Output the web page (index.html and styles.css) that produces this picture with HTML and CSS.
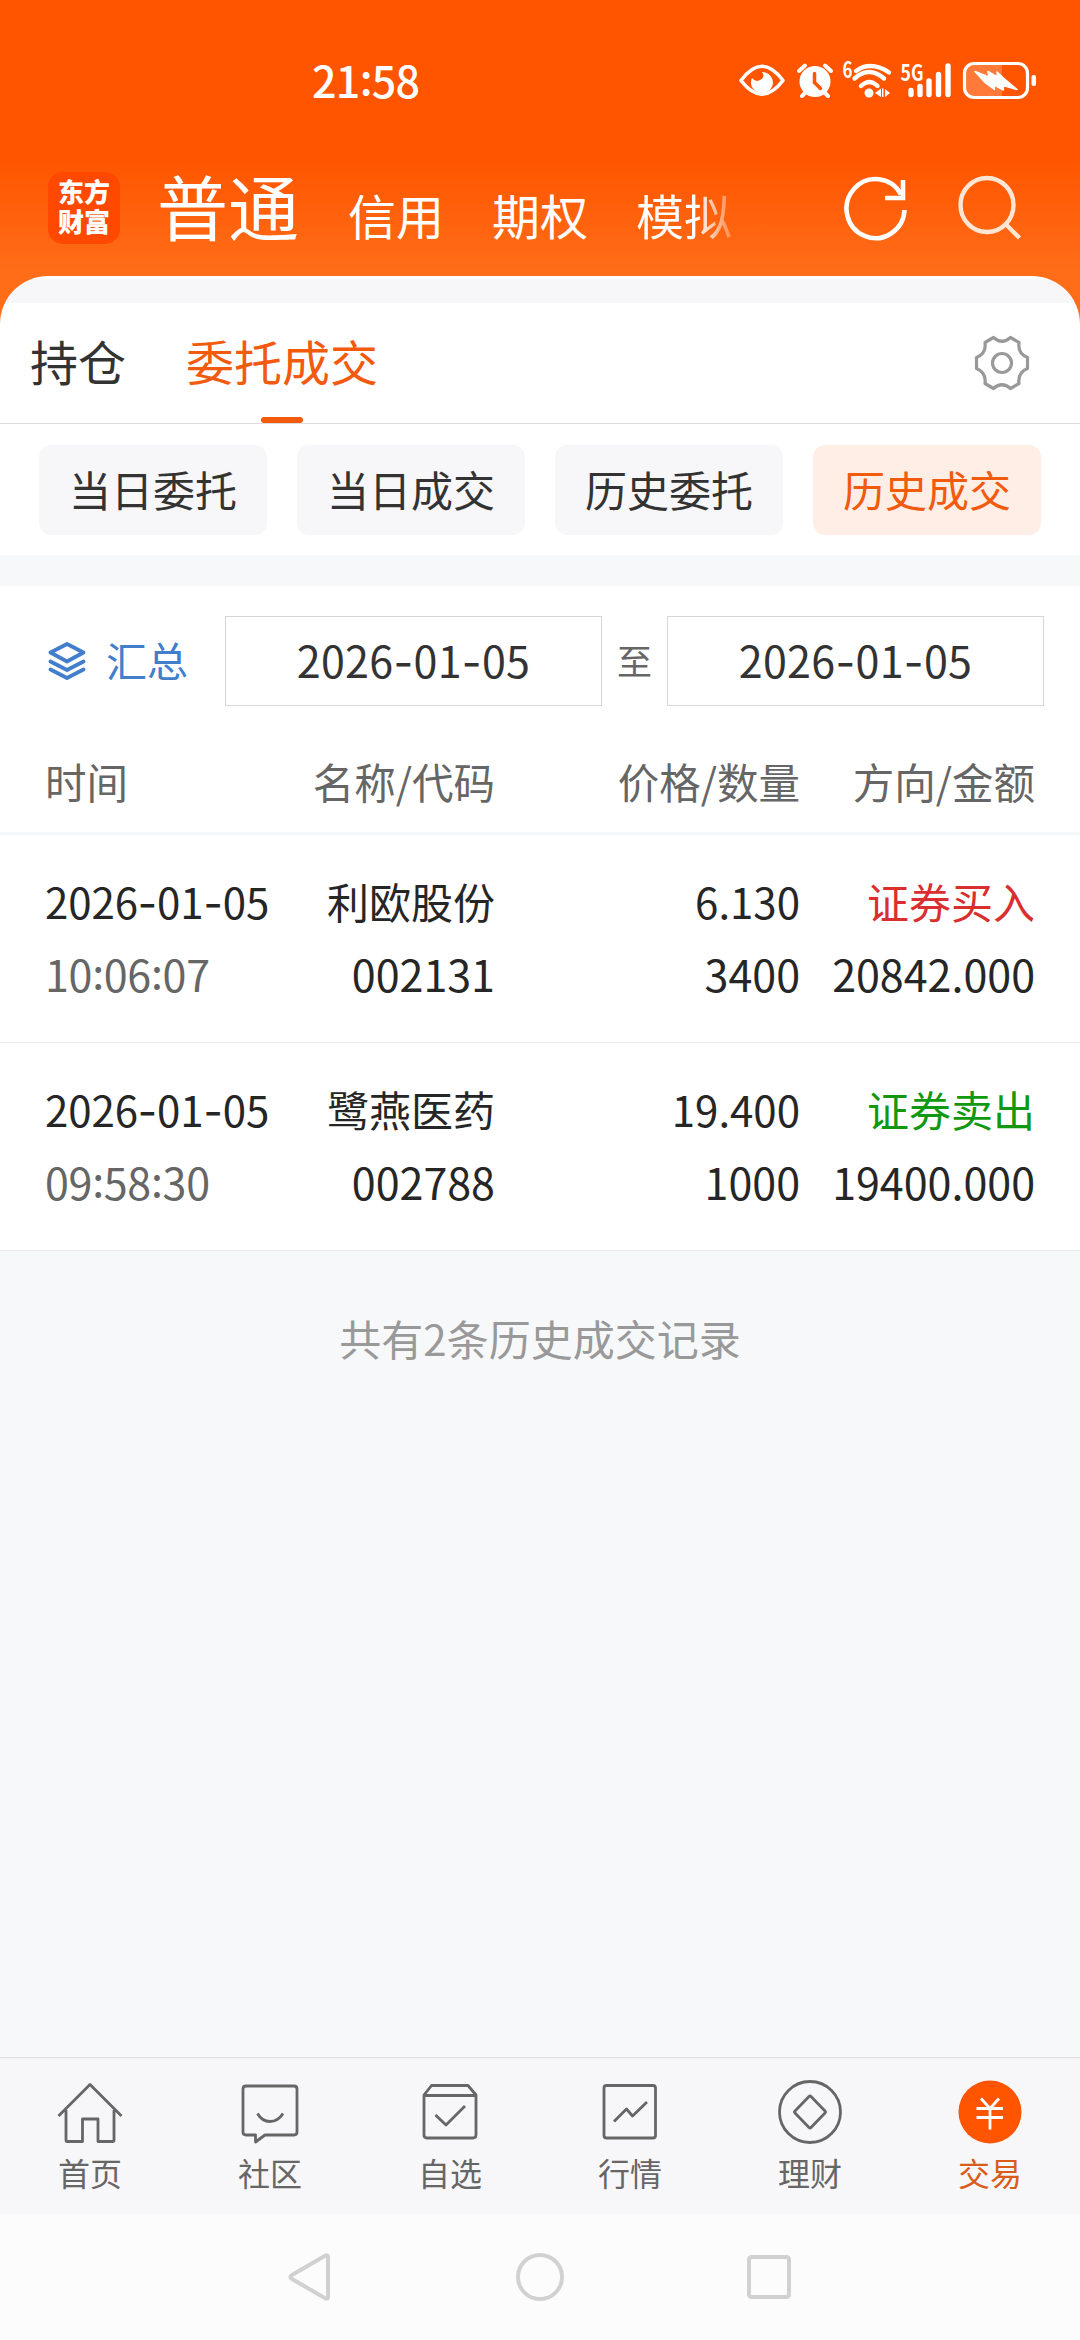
FILE: index.html
```html
<!DOCTYPE html>
<html lang="zh-CN">
<head>
<meta charset="utf-8">
<title>历史成交</title>
<link rel="stylesheet" href="styles.css">
</head>
<body>
<div class="screen">
  <header class="header">
    <div class="status">
      <div class="clock">21<span class="colon">:</span>58</div>
      <svg class="status-icons" width="304" height="60" viewBox="736 48 304 60" fill="#fff">
        <path d="M741 80.500Q762 52 783 80.500Q762 108 741 80.500Z" fill="none" stroke="#fff" stroke-width="3.600" stroke-linejoin="round"/>
        <path d="M762 72a11 10.500 0 1 1 -10 6q3 4 7 2.500q7-3 3-8.500z"/>
        <circle cx="815" cy="81.500" r="15.500"/>
        <path d="M799 71l6-5.500M831 71l-6-5.500M802 96l4-4M828 96l-4-4" stroke="#fff" stroke-width="4" stroke-linecap="round"/>
        <path d="M814.500 73.500v9l6 6" fill="none" stroke="#ff5500" stroke-width="3.500" stroke-linecap="round"/>
        <text x="842.500" y="78" class="net" textLength="10" lengthAdjust="spacingAndGlyphs">6</text>
        <path d="M856 71q15-10.500 33 1.500M854.500 78.500q14.500-13 29.500 0M861 86q8.500-8 16.500 0" fill="none" stroke="#fff" stroke-width="4.400" stroke-linecap="round"/>
        <circle cx="869" cy="93" r="4.500"/>
        <path d="M881 88.500v8.500l-6-4zM883.500 88.500v8.500h-1.500v-8.500zM885 89l5 4-5 4z"/>
        <text x="900.500" y="80.500" class="net" textLength="23" lengthAdjust="spacingAndGlyphs">5G</text>
        <path d="M911 90.500v4M920 86.500v8M929 81v13.500M938.500 74.500v20M948 66v28.500" stroke="#fff" stroke-width="5.400" stroke-linecap="round"/>
        <path d="M974 64h28v34h-28q-9 0-9-9v-16q0-9 9-9z" fill-opacity=".22"/>
        <rect x="964.500" y="63.500" width="63" height="34" rx="9.500" fill="none" stroke="#fff" stroke-width="3.200"/>
        <rect x="1031.500" y="75" width="4.500" height="11" rx="2"/>
        <path d="M975 71.500l14 5.500-1-5.500 9.500 5.500-.5-5 7 6.500 13 11-14-4 .5 4.500-9.500-5 .5 4.500-9-6.500z" stroke="#fff" stroke-width="1.500" stroke-linejoin="round"/>
      </svg>
    </div>
    <div class="topnav">
      <div class="logo">东方<br>财富</div>
      <nav class="accounts">
        <span class="account current">普通</span>
        <span class="account">信用</span>
        <span class="account">期权</span>
        <span class="account fading">模拟</span>
      </nav>
      <svg class="refresh" width="66" height="68" viewBox="843 176 66 68" fill="none" stroke="#fff" stroke-width="4.600">
        <path d="M904.500 210A29 29.500 0 1 1 901 194.500"/>
        <path d="M903 180v18h-18"/>
      </svg>
      <svg class="search" width="66" height="68" viewBox="956 174 66 68" fill="none" stroke="#ffe6d4" stroke-width="4.400">
        <ellipse cx="987" cy="205" rx="26.500" ry="27"/>
        <path d="M1005.500 224l14 14"/>
      </svg>
    </div>
  </header>

  <section class="panel">
    <div class="tabs">
      <span class="tab">持仓</span>
      <span class="tab active">委托成交</span>
      <svg class="gear" width="58" height="58" viewBox="-29 -29 58 58" fill="none" stroke="#999" stroke-width="3.200" stroke-linejoin="round">
        <path d="M-8.500-25.500Q0-18 8.500-25.500L17-20.500Q15.500-9.500 25.500-5.500V5.500Q15.500 9.500 17 20.500L8.500 25.500Q0 18-8.500 25.500L-17 20.500Q-15.500 9.500-25.500 5.500V-5.500Q-15.500-9.500-17-20.500Z"/>
        <circle r="9.500"/>
      </svg>
    </div>
    <div class="chips">
      <span class="chip">当日委托</span>
      <span class="chip">当日成交</span>
      <span class="chip">历史委托</span>
      <span class="chip selected">历史成交</span>
    </div>
  </section>

  <section class="records">
    <div class="filter">
      <div class="summary">
        <svg width="38" height="40" viewBox="0 0 38 40" fill="none" stroke="#427ecc" stroke-width="3.800" stroke-linejoin="round" stroke-linecap="round">
          <path d="M19 3L35.500 11.500 19 20.500 2.500 11.500ZM2.500 20.500L19 29 35.500 20.500M2.500 28.500L19 37 35.500 28.500"/>
        </svg>
        <span>汇总</span>
      </div>
      <div class="date">2026<span class="dash">-</span>01<span class="dash">-</span>05</div>
      <span class="to">至</span>
      <div class="date">2026<span class="dash">-</span>01<span class="dash">-</span>05</div>
    </div>
    <div class="row head">
      <span>时间</span><span>名称/代码</span><span>价格/数量</span><span>方向/金额</span>
    </div>
    <div class="row">
      <span class="day">2026<span class="dash">-</span>01<span class="dash">-</span>05</span><span>利欧股份</span><span>6.130</span><span class="buy">证券买入</span>
      <span class="time">10<span class="colon">:</span>06<span class="colon">:</span>07</span><span>002131</span><span>3400</span><span>20842.000</span>
    </div>
    <div class="row">
      <span class="day">2026<span class="dash">-</span>01<span class="dash">-</span>05</span><span>鹭燕医药</span><span>19.400</span><span class="sell">证券卖出</span>
      <span class="time">09<span class="colon">:</span>58<span class="colon">:</span>30</span><span>002788</span><span>1000</span><span>19400.000</span>
    </div>
  </section>

  <p class="total">共有2条历史成交记录</p>

  <nav class="tabbar">
    <div class="item">
      <svg width="68" height="68" viewBox="-34 -34 68 68">
        <path d="M-31.500 5L0-26.500 31.500 5M-24-1V29.500q0 1 1 1H-7.500V8H8V30.500H23q1 0 1-1V-1"/>
      </svg>
      <span>首页</span>
    </div>
    <div class="item">
      <svg width="68" height="68" viewBox="-34 -34 68 68">
        <path d="M-24-25H24q3 0 3 3V21q0 3-3 3H-5L-14.500 31V24H-24q-3 0-3-3V-22q0-3 3-3z"/>
        <path d="M-12.500 2.500Q-8 10.500 0 10.500T13 2.500"/>
      </svg>
      <span>社区</span>
    </div>
    <div class="item">
      <svg width="68" height="68" viewBox="-34 -34 68 68">
        <path d="M-26-16L-18.500-25.500H18L26-16V24q0 3-3 3H-23q-3 0-3-3zM-26-15.500H26M-14.500 4L-4 14 15-5"/>
      </svg>
      <span>自选</span>
    </div>
    <div class="item">
      <svg width="68" height="68" viewBox="-34 -34 68 68">
        <rect x="-26" y="-25.500" width="51.500" height="52.500" rx="2.500"/>
        <path d="M-16 10.500L-3.500-2 2.500 5 17-9"/>
      </svg>
      <span>行情</span>
    </div>
    <div class="item">
      <svg width="68" height="68" viewBox="-34 -34 68 68">
        <circle cy="1" r="30.500"/>
        <path d="M-1-14.500q1-1 2 0L15 0q1 1 0 2L1 16.500q-1 1-2 0L-15 2q-1-1 0-2z"/>
      </svg>
      <span>理财</span>
    </div>
    <div class="item on">
      <svg width="68" height="68" viewBox="-34 -34 68 68">
        <circle class="disc" cy="1" r="31.500"/>
        <path class="yen" d="M-9-12.500L0-2.500 9-12.500M-13.500-2.500H13M-13.500 6.500H13M0-2.500V18.500"/>
      </svg>
      <span>交易</span>
    </div>
  </nav>

  <div class="sysnav">
    <svg width="52" height="52" viewBox="-26 -26 52 52"><path d="M17-20V20q0 2.500-2.500 1.500L-19 2q-3-2 0-4L14.500-21.500q2.500-1 2.500 1.500z"/></svg>
    <svg width="52" height="52" viewBox="-26 -26 52 52"><circle r="22"/></svg>
    <svg width="52" height="52" viewBox="-26 -26 52 52"><rect x="-20" y="-20" width="40" height="40" rx="2.500"/></svg>
  </div>
</div>
</body>
</html>
```
FILE: styles.css
```css
* { box-sizing: border-box; }

body {
  margin: 0;
  background: #f7f8fa;
  font-family: "Noto Sans CJK SC", sans-serif;
  color: #333;
}

svg { display: block; flex: none; }

.screen {
  width: 1080px;
  height: 2340px;
  display: flex;
  flex-direction: column;
  overflow: hidden;
}

.colon { vertical-align: 0.08em; line-height: 0; }
.dash { font-family: Inter, sans-serif; line-height: 0; }

/* Orange header */
.header {
  height: 324px;
  flex: none;
  background: linear-gradient(#ff5500 0, #ff5500 158px, #ff6d18 272px, #ff6d18 100%);
  color: #fff;
}

.status {
  height: 156px;
  display: flex;
  align-items: flex-start;
  justify-content: space-between;
  padding: 48px 40px 0 312px;
}

.clock {
  margin-top: 11px;
  font-size: 43px;
  font-weight: 500;
  line-height: 40px;
  letter-spacing: -0.7px;
}

.net {
  font-family: "Noto Sans CJK SC", sans-serif;
  font-size: 22px;
  font-weight: 700;
}

.topnav {
  display: flex;
  align-items: flex-start;
  padding-left: 48px;
}

.logo {
  width: 72px;
  height: 72px;
  margin-top: 16px;
  padding-top: 4px;
  border-radius: 15px;
  background: #ff4800;
  text-align: center;
  font-size: 26px;
  font-weight: 900;
  line-height: 30px;
}

.accounts {
  display: flex;
  align-items: baseline;
  gap: 48px;
  width: 640px;
  margin-left: 37px;
  line-height: 96px;
}

.account { font-size: 48px; }
.account.current { font-size: 71px; margin-right: 1px; }

.fading {
  background: linear-gradient(90deg, #fff 62%, rgba(255, 255, 255, 0.25));
  background-clip: text;
  color: transparent;
}

.refresh { margin: 20px 0 0 46px; }
.search { margin: 18px 0 0 47px; }

/* White panel with tabs and chips */
.panel {
  height: 279px;
  margin-top: -48px;
  flex: none;
  border-radius: 48px 48px 0 0;
  background: linear-gradient(#fff 2px, #f7f7f9 4px, #f7f7f9 27px, #fff 27px);
  padding-top: 27px;
}

.tabs {
  height: 121px;
  display: flex;
  align-items: center;
  padding: 0 49px 0 30px;
  border-bottom: 1px solid #ddd;
}

.tab {
  height: 120px;
  font-size: 48px;
  line-height: 115px;
}

.tab.active {
  margin-left: 60px;
  color: #f25a0e;
  display: flex;
  flex-direction: column;
  align-items: center;
}

.tab.active::after {
  content: "";
  width: 42px;
  height: 6px;
  margin-top: -1px;
  border-radius: 3px;
  background: #f25a0e;
}

.gear { margin-left: auto; }

.chips {
  display: grid;
  grid-template-columns: repeat(4, 228px);
  gap: 30px;
  padding: 21px 39px 0;
}

.chip {
  height: 90px;
  border-radius: 12px;
  background: #f7f7f9;
  font-size: 42px;
  line-height: 87px;
  text-align: center;
}

.chip.selected {
  background: #ffeee6;
  color: #f25a0e;
}

/* Trade records */
.records {
  margin-top: 31px;
  flex: none;
  background: #fff;
}

.filter {
  height: 150px;
  display: flex;
  align-items: flex-start;
  padding: 30px 36px 0 48px;
}

.summary {
  width: 177px;
  height: 90px;
  display: flex;
  align-items: center;
  gap: 20px;
  font-size: 41px;
  line-height: 86px;
  color: #427ecc;
}

.summary span { height: 90px; }

.date {
  width: 377px;
  height: 90px;
  border: 1px solid #d4d6d8;
  font-size: 43px;
  line-height: 84px;
  letter-spacing: 0.3px;
  text-align: center;
}

.to {
  width: 65px;
  font-size: 35px;
  line-height: 88px;
  text-align: center;
  color: #666;
}

.row {
  height: 208px;
  display: grid;
  grid-template-columns: 245px 205px 305px 235px;
  grid-template-rows: 73px 73px;
  align-content: start;
  padding: 29px 45px 0;
  border-bottom: 1px solid #ebebed;
  font-size: 42px;
  line-height: 73px;
  text-align: right;
  color: #262626;
}

.row > span:nth-child(4n + 1) { text-align: left; }

.row.head {
  height: 99px;
  grid-template-rows: 90px;
  padding-top: 0;
  border-bottom: 3px solid #f5f7f9;
  font-size: 41.5px;
  line-height: 91px;
  color: #666;
}

.row .day { letter-spacing: -0.1px; }
.row > span:nth-child(n + 5) { font-size: 43px; }
.row .time { color: #666; letter-spacing: -0.3px; }
.row .buy { color: #d92f2f; }
.row .sell { color: #109810; }

.total {
  margin: 59px 0 0;
  font-size: 42px;
  line-height: 56px;
  text-align: center;
  color: #999;
}

/* Bottom app tabs */
.tabbar {
  height: 157px;
  margin-top: auto;
  flex: none;
  display: grid;
  grid-template-columns: repeat(6, 1fr);
  border-top: 1px solid #dfdfe1;
  background: #f7f7f9;
}

.item {
  display: flex;
  flex-direction: column;
  align-items: center;
  padding-top: 19px;
  font-size: 32px;
  line-height: 54px;
  color: #666;
}

.item svg {
  fill: none;
  stroke: #666;
  stroke-width: 2.8;
  stroke-linejoin: round;
}

.item.on { color: #d95c1a; }
.item .disc { fill: #ff5500; stroke: none; }
.item .yen { stroke: #fff; }

/* System navigation */
.sysnav {
  height: 126px;
  flex: none;
  display: flex;
  justify-content: center;
  gap: 177px;
  padding-top: 37px;
  background: #fcfcfc;
}

.sysnav svg {
  fill: none;
  stroke: #d1d1d1;
  stroke-width: 4;
}
```
